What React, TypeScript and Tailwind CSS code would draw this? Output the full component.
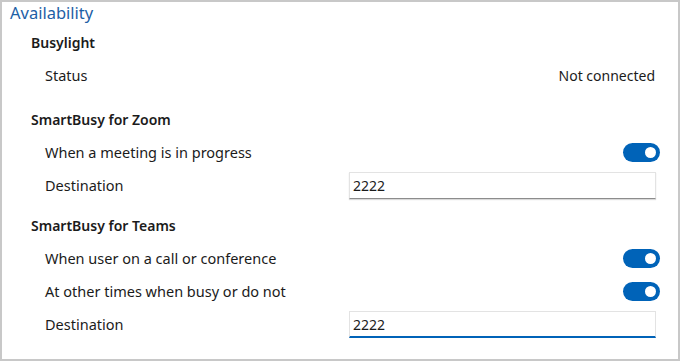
import React from "react";

function Toggle() {
    return (
        <div className="relative h-[19px] w-[37px] rounded-full bg-[#0063b8]">
            <div className="absolute right-[4px] top-[4px] h-[11px] w-[11px] rounded-full bg-white" />
        </div>
    );
}

function TextBox({ value, focused }: { value: string; focused?: boolean }) {
    return (
        <div
            className={
                focused
                    ? "mr-[4px] flex h-[27px] w-[307px] items-center border border-b-2 border-[#e3e3e3] border-b-[#0063b8] pl-[3px] text-[14px]"
                    : "mr-[4px] flex h-[27px] w-[307px] items-center border border-[#e3e3e3] border-b-[#8c8c8c] pl-[3px] text-[14px] shadow-[0_1px_1px_rgba(0,0,0,0.15)]"
            }
        >
            {value}
        </div>
    );
}

function Heading({ children, className }: { children: React.ReactNode; className?: string }) {
    return (
        <div className={"flex h-[34px] items-center pl-[29px] text-[14px] font-semibold " + (className ?? "")}>
            {children}
        </div>
    );
}

function Row({ label, children }: { label: string; children?: React.ReactNode }) {
    return (
        <div className="flex h-[33px] items-center pl-[43px] pr-[18px] text-[14.5px]">
            <div className="flex-1">{label}</div>
            {children}
        </div>
    );
}

export default function App() {
    return (
        <div
            className="h-[361px] w-[680px] overflow-hidden border-2 border-[#c8c8c8] bg-white text-[#1b1b1b]"
            style={{ fontFamily: '"Noto Sans", "Open Sans", sans-serif' }}
        >
            {/* Title */}
            <div className="flex h-[23px] items-center pl-[8px] text-[16.5px] text-[#1e5fa6]">
                Availability
            </div>

            {/* Busylight */}
            <Heading>Busylight</Heading>
            <Row label="Status">
                <span className="mr-[5px] text-[14px]">Not connected</span>
            </Row>

            {/* Zoom */}
            <Heading className="mt-[10px]">SmartBusy for Zoom</Heading>
            <Row label="When a meeting is in progress">
                <Toggle />
            </Row>
            <Row label="Destination">
                <TextBox value="2222" />
            </Row>

            {/* Teams */}
            <Heading className="mt-[6px] h-[32px]">SmartBusy for Teams</Heading>
            <Row label="When user on a call or conference">
                <Toggle />
            </Row>
            <Row label="At other times when busy or do not">
                <Toggle />
            </Row>
            <Row label="Destination">
                <TextBox value="2222" focused />
            </Row>
        </div>
    );
}
